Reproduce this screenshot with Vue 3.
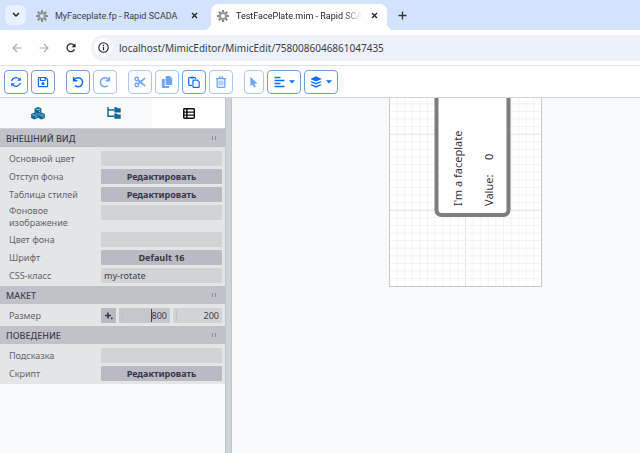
<script setup>
import { ref } from 'vue'

const tabs = [
  { title: 'MyFaceplate.fp - Rapid SCADA', active: false },
  { title: 'TestFacePlate.mim - Rapid SCADA', active: true }
]
const url = ref('localhost/MimicEditor/MimicEdit/7580086046861047435')

const toolGroups = [
  [{ icon: 'sync', label: 'Обновить' }, { icon: 'save', label: 'Сохранить' }],
  [{ icon: 'undo', label: 'Отменить' }, { icon: 'redo', label: 'Повторить', off: true }],
  [
    { icon: 'cut', label: 'Вырезать', off: true },
    { icon: 'copy', label: 'Копировать', off: true },
    { icon: 'paste', label: 'Вставить' },
    { icon: 'trash', label: 'Удалить', off: true }
  ],
  [
    { icon: 'pointer', label: 'Указатель', off: true, slim: true },
    { icon: 'align', label: 'Выравнивание', menu: true },
    { icon: 'layers', label: 'Порядок', menu: true }
  ]
]

const sections = ref([
  {
    title: 'ВНЕШНИЙ ВИД',
    rows: [
      { id: 'color', label: 'Основной цвет', kind: 'text', value: '' },
      { id: 'padding', label: 'Отступ фона', kind: 'button', value: 'Редактировать' },
      { id: 'styles', label: 'Таблица стилей', kind: 'button', value: 'Редактировать' },
      { id: 'image', label: 'Фоновое изображение', kind: 'text', value: '' },
      { id: 'back', label: 'Цвет фона', kind: 'text', value: '' },
      { id: 'font', label: 'Шрифт', kind: 'button', value: 'Default 16' },
      { id: 'css', label: 'CSS-класс', kind: 'text', value: 'my-rotate' }
    ]
  },
  {
    title: 'МАКЕТ',
    rows: [{ id: 'size', label: 'Размер', kind: 'size', value: '800', second: '200' }]
  },
  {
    title: 'ПОВЕДЕНИЕ',
    rows: [
      { id: 'hint', label: 'Подсказка', kind: 'text', value: '' },
      { id: 'script', label: 'Скрипт', kind: 'button', value: 'Редактировать' }
    ]
  }
])

const gear = Array.from({ length: 8 }, (_, i) => i * 45)
const minorX = Array.from({ length: 19 }, (_, i) => (i + 1) * 10)
const minorY = Array.from({ length: 24 }, (_, i) => 247 - (i + 1) * 10)
</script>

<template>
  <div class="browser">
    <header class="tabstrip">
      <button class="tab-search" aria-label="Поиск вкладок">
        <svg width="8" height="6" viewBox="0 0 8 6"><path d="M1 1l3 3 3-3" fill="none" stroke="#222" stroke-width="1.5" /></svg>
      </button>
      <div v-for="tab in tabs" :key="tab.title" class="tab" :class="{ active: tab.active }">
        <svg class="gear" width="12" height="12" viewBox="0 0 12 12">
          <g fill="#858585">
            <rect v-for="a in gear" :key="a" x="5" y="0" width="2" height="3" rx=".5" :transform="`rotate(${a} 6 6)`" />
          </g>
          <circle cx="6" cy="6" r="3" fill="none" stroke="#8c8c8c" stroke-width="2" />
          <circle cx="6" cy="6" r="3.2" fill="none" stroke="#bbb" stroke-width=".6" />
        </svg>
        <span class="tab-title">{{ tab.title }}</span>
        <button class="plain close" aria-label="Закрыть">
          <svg width="7" height="7" viewBox="0 0 7 7"><path d="M1 1l5 5M6 1L1 6" stroke="#222" stroke-width="1.3" /></svg>
        </button>
      </div>
      <button class="plain new-tab" aria-label="Новая вкладка">
        <svg width="9" height="9" viewBox="0 0 9 9"><path d="M4.5 .5v8M.5 4.5h8" stroke="#333" stroke-width="1.3" /></svg>
      </button>
    </header>

    <div class="navbar">
      <button class="plain nav" aria-label="Назад" disabled>
        <svg width="10" height="10" viewBox="0 0 10 10"><path d="M9.5 5H1M5 1L1 5l4 4" fill="none" stroke="#aaa" stroke-width="1.1" /></svg>
      </button>
      <button class="plain nav" aria-label="Вперёд" disabled>
        <svg width="10" height="10" viewBox="0 0 10 10"><path d="M.5 5H9M5 1l4 4-4 4" fill="none" stroke="#aaa" stroke-width="1.1" /></svg>
      </button>
      <button class="plain nav" aria-label="Перезагрузить">
        <svg width="10" height="10" viewBox="0 0 10 10"><path d="M8.5 6.2A3.9 3.9 0 1 1 8 2.4L9 3.6" fill="none" stroke="#222" stroke-width="1.3" /><path d="M9.5.3v3.9H5.6z" fill="#222" /></svg>
      </button>
      <div class="omnibox">
        <span class="site-info">
          <svg width="11" height="11" viewBox="0 0 11 11"><circle cx="5.5" cy="5.5" r="4.7" fill="none" stroke="#222" stroke-width="1.1" /><path d="M5.5 4.8v3.4M5.5 2.7v1.2" stroke="#222" stroke-width="1.3" /></svg>
        </span>
        <input v-model="url" class="url" aria-label="Адрес" />
      </div>
    </div>

    <nav class="toolbar">
      <div v-for="(group, g) in toolGroups" :key="g" class="group">
        <button
          v-for="t in group"
          :key="t.icon"
          class="tool"
          :class="{ slim: t.slim, menu: t.menu }"
          :disabled="t.off"
          :aria-label="t.label"
        >
          <svg v-if="t.icon === 'sync'" width="12" height="12" viewBox="0 0 12 12" fill="none" stroke="currentColor" stroke-width="1.3"><path d="M1.6 5.2A4.4 4.4 0 0 1 9.2 3.2M10.4 6.8A4.4 4.4 0 0 1 2.8 8.8" /><path d="M10.8 1.2v3.5H7.3zM1.2 10.8V7.3h3.5z" fill="currentColor" stroke="none" /></svg>
          <svg v-else-if="t.icon === 'save'" width="12" height="12" viewBox="0 0 12 12"><path d="M2 1.5h6.6l2 2v6.4a.7.7 0 0 1-.7.7H2.1a.7.7 0 0 1-.7-.7V2.1a.6.6 0 0 1 .6-.6zM3.4 1.8v2.7h4.7V1.8" fill="none" stroke="currentColor" stroke-width="1.2" /><circle cx="6" cy="7.4" r="1.5" fill="currentColor" /></svg>
          <svg v-else-if="t.icon === 'undo'" width="12" height="12" viewBox="0 0 12 12"><path d="M1.6 1v3.7h3.7M2 4.4A4.5 4.5 0 1 1 3 9.5" fill="none" stroke="currentColor" stroke-width="1.5" /></svg>
          <svg v-else-if="t.icon === 'redo'" width="12" height="12" viewBox="0 0 12 12"><path d="M10.4 1v3.7H6.7M10 4.4A4.5 4.5 0 1 0 9 9.5" fill="none" stroke="currentColor" stroke-width="1.5" /></svg>
          <svg v-else-if="t.icon === 'cut'" width="12" height="12" viewBox="0 0 12 12" fill="none" stroke="currentColor" stroke-width="1.4"><circle cx="2.7" cy="3" r="1.7" /><circle cx="2.7" cy="9" r="1.7" /><path d="M4 4l7 5.8M4 8l7-5.8" stroke-width="1.7" /></svg>
          <svg v-else-if="t.icon === 'copy'" width="12" height="12" viewBox="0 0 12 12" fill="currentColor"><path d="M5.4 0h3.4l2.4 2.4v5.8a.8.8 0 0 1-.8.8H5.4a.8.8 0 0 1-.8-.8V.8a.8.8 0 0 1 .8-.8z" /><path d="M1.6 3h2.1v6.9h4.5v1.3a.8.8 0 0 1-.8.8H1.6a.8.8 0 0 1-.8-.8V3.8A.8.8 0 0 1 1.6 3z" /></svg>
          <svg v-else-if="t.icon === 'paste'" width="12" height="12" viewBox="0 0 12 12" fill="none" stroke="currentColor" stroke-width="1.2"><path d="M4 9.3H1.4a.7.7 0 0 1-.7-.7V2.2a.7.7 0 0 1 .7-.7h5.4a.7.7 0 0 1 .7.7V3" /><path d="M2.6 1.6h3" stroke-width="2" /><path d="M5.7 4.2h3.5l2 2v4.5a.7.7 0 0 1-.7.7H5.7a.7.7 0 0 1-.7-.7V4.9a.7.7 0 0 1 .7-.7z" /></svg>
          <svg v-else-if="t.icon === 'trash'" width="12" height="12" viewBox="0 0 12 12" fill="none" stroke="currentColor"><path d="M1 2.6h10M4 2.3L4.7 1h2.6L8 2.3" stroke-width="1.2" /><path d="M2.2 3v7.4c0 .6.4 1 1 1h5.6c.6 0 1-.4 1-1V3" stroke-width="1.3" /><path d="M4.2 4.5v5M6 4.5v5M7.8 4.5v5" stroke-width=".9" /></svg>
          <svg v-else-if="t.icon === 'pointer'" width="8" height="12" viewBox="0 0 8 12"><path d="M.4.8v9.4l2.2-1.9 1.5 3.3 1.7-.8-1.5-3.2h3.2z" fill="currentColor" /></svg>
          <svg v-else-if="t.icon === 'align'" width="11" height="12" viewBox="0 0 11 12"><path d="M.5 1.5h6M.5 4.5h10M.5 7.5h6M.5 10.5h10" stroke="currentColor" stroke-width="1.4" /></svg>
          <svg v-else width="12" height="12" viewBox="0 0 12 12" fill="currentColor"><path d="M6 .3l5.8 2.6L6 5.6.2 2.9z" /><path d="M.2 5.9l1.6-.7L6 7.1l4.2-1.9 1.6.7L6 8.6z" /><path d="M.2 8.9l1.6-.7L6 10.1l4.2-1.9 1.6.7L6 11.7z" /></svg>
          <svg v-if="t.menu" width="6" height="4" viewBox="0 0 6 4"><path d="M0 .3h6L3 3.5z" fill="currentColor" /></svg>
        </button>
      </div>
    </nav>

    <main class="workspace">
      <aside class="side">
        <div class="side-tabs">
          <button class="side-tab" aria-label="Компоненты">
            <svg width="14" height="13" viewBox="0 0 14 13">
              <g v-for="p in [[7, 3.5], [3.5, 9.1], [10.5, 9.1]]" :key="p[0]" :transform="`translate(${p[0]} ${p[1]})`">
                <path d="M0-3.5L3.4-2V2L0 3.5-3.4 2V-2z" fill="#0a6796" />
                <path d="M-2-1.5L0-.7l2-.8M.9 1.2L2.3.6" fill="none" stroke="#f8f9fa" stroke-width=".7" />
              </g>
            </svg>
          </button>
          <button class="side-tab" aria-label="Структура">
            <svg width="14" height="12" viewBox="0 0 14 12"><path d="M1 0v9.2h6M1 3h6" fill="none" stroke="#0a6796" stroke-width="1.4" /><path d="M7.3.3h2.6l.8.9h3v4.2H7.3zM7.3 6.5h2.6l.8.9h3v4.3H7.3z" fill="#0a6796" /></svg>
          </button>
          <button class="side-tab current" aria-label="Свойства">
            <svg width="12" height="11" viewBox="0 0 12 11"><rect width="12" height="11" rx="1.4" fill="#111" /><path d="M1.5 1.6h1.6v1.8H1.5zM4.6 1.6h6v1.8h-6zM1.5 4.7h1.6v1.7H1.5zM4.6 4.7h6v1.7h-6zM1.5 7.7h1.6v1.8H1.5zM4.6 7.7h6v1.8h-6z" fill="#fff" /></svg>
          </button>
        </div>
        <section v-for="s in sections" :key="s.title" class="section">
          <h2 class="section-head">
            <span>{{ s.title }}</span>
            <i class="grip"></i>
          </h2>
          <div class="rows">
            <div v-for="r in s.rows" :key="r.id" class="row">
              <label :for="r.id" class="row-label">{{ r.label }}</label>
              <button v-if="r.kind === 'button'" :id="r.id" class="field action">{{ r.value }}</button>
              <input v-else-if="r.kind === 'text'" :id="r.id" v-model="r.value" class="field" />
              <div v-else class="size">
                <button class="field action square" aria-label="Раскрыть">
                  <svg width="8" height="8" viewBox="0 0 8 8"><path d="M3 .5v6M0 3.5h6" stroke="#373845" stroke-width="1.6" /><path d="M6 5.6h1.6v1.6H6z" fill="#373845" /></svg>
                </button>
                <span class="number focused"><i class="caret"></i><input :id="r.id" v-model="r.value" class="field" /></span>
                <span class="number"><input v-model="r.second" class="field" aria-label="Высота" /></span>
              </div>
            </div>
          </div>
        </section>
      </aside>
      <div class="splitter"></div>
      <div class="canvas">
        <svg class="mimic" width="154" height="190" viewBox="0 0 154 190">
          <rect x=".5" y="-5" width="152" height="193.5" fill="#fff" />
          <g transform="translate(.5 .5) scale(.76)">
            <path v-for="x in minorX" :key="'x' + x" :d="`M${x} -2V247`" :stroke="x % 100 ? '#f2f3f4' : '#dde1e5'" stroke-width="1.3" />
            <path v-for="y in minorY" :key="'y' + y" :d="`M0 ${y}H200`" :stroke="(247 - y) % 100 ? '#f2f3f4' : '#dde1e5'" stroke-width="1.3" />
          </g>
          <rect x=".5" y="-5" width="152" height="193.5" fill="none" stroke="#c6cacd" />
          <rect x="47.5" y="-20" width="72" height="137" rx="5" fill="#fff" stroke="#7d7d7d" stroke-width="4" />
          <g class="plate-text">
            <text transform="translate(73 108) rotate(-90)">I'm a faceplate</text>
            <text transform="translate(104 108) rotate(-90)">Value:</text>
            <text transform="translate(104 62) rotate(-90)">0</text>
          </g>
        </svg>
      </div>
    </main>
  </div>
</template>

<style>
body {
  margin: 0;
}
</style>

<style scoped>
* {
  box-sizing: border-box;
}
.browser {
  display: flex;
  flex-direction: column;
  min-height: 100vh;
  background: #fff;
  font-family: "Noto Sans", "Open Sans", sans-serif;
  color: #333;
}
button,
input {
  font-family: inherit;
  margin: 0;
}
svg {
  display: block;
  flex: none;
}
.plain {
  display: flex;
  padding: 0;
  border: 0;
  background: none;
}
.tabstrip {
  display: flex;
  align-items: flex-end;
  height: 30px;
  padding-left: 5px;
  background: #d3e2fd;
}
.tab-search {
  display: flex;
  align-items: center;
  justify-content: center;
  align-self: center;
  width: 21px;
  height: 20px;
  margin-right: 4px;
  padding: 0;
  border: 0;
  border-radius: 6px;
  background: #e9f0fe;
}
.tab {
  display: flex;
  align-items: center;
  gap: 7px;
  width: 181px;
  height: 26px;
  padding: 0 13px 3px 6px;
  border-radius: 7px 7px 0 0;
  font-family: Roboto, "Noto Sans", sans-serif;
  font-size: 9px;
  color: #3c4043;
}
.tab.active {
  width: 176px;
  padding-right: 9px;
  position: relative;
  background: #fff;
  color: #222;
}
.tab.active::before,
.tab.active::after {
  content: "";
  position: absolute;
  bottom: 0;
  width: 7px;
  height: 7px;
}
.tab.active::before {
  left: -7px;
  background: radial-gradient(circle at 0 0, #d3e2fd 7px, #fff 7px);
}
.tab.active::after {
  right: -7px;
  background: radial-gradient(circle at 100% 0, #d3e2fd 7px, #fff 7px);
}
.tab-title {
  flex: 1;
  min-width: 0;
  overflow: hidden;
  white-space: nowrap;
}
.tab.active .tab-title {
  mask-image: linear-gradient(to right, #000 calc(100% - 20px), transparent);
}
.close {
  margin-left: 2px;
}
.new-tab {
  align-self: center;
  margin-left: 11px;
}
.navbar {
  display: flex;
  align-items: center;
  height: 36px;
  padding-left: 12px;
  gap: 17px;
  border-bottom: 1px solid #dfe1e5;
}
.omnibox {
  display: flex;
  flex: 1;
  align-items: center;
  gap: 6px;
  height: 26px;
  padding-left: 3px;
  border-radius: 13px 0 0 13px;
  background: #edf1fa;
}
.navbar .omnibox {
  margin-left: -2px;
}
.site-info {
  display: flex;
  align-items: center;
  justify-content: center;
  width: 19px;
  height: 19px;
  border-radius: 50%;
  background: #fff;
}
.url {
  flex: 1;
  min-width: 0;
  padding: 0;
  border: 0;
  background: none;
  color: #3b3e42;
  font-size: 10px;
}
.toolbar {
  display: flex;
  align-items: center;
  gap: 11px;
  height: 32px;
  padding-left: 4px;
  border-bottom: 1px solid #ced3d8;
}
.group {
  display: flex;
  gap: 3px;
}
.tool {
  display: flex;
  align-items: center;
  justify-content: center;
  gap: 4px;
  width: 24px;
  height: 24px;
  padding: 0;
  border: 1px solid #6f9fd8;
  border-radius: 4px;
  background: #fff;
  color: #0d6efd;
}
.tool:disabled {
  border-color: #a9c8ee;
  color: #6ba6fb;
}
.tool.slim {
  width: 20px;
}
.tool.menu {
  width: 34px;
}
.workspace {
  display: flex;
  flex: 1;
}
.side {
  width: 225px;
  background: #f8f9fa;
}
.side-tabs {
  display: grid;
  grid-template-columns: 76px 76px 1fr;
  height: 31px;
  border-bottom: 1px solid #cdd0d4;
}
.side-tab {
  display: flex;
  align-items: center;
  justify-content: center;
  padding: 0;
  border: 0;
  background: #f8f9fa;
}
.side-tab.current {
  border-radius: 3px 3px 0 0;
  background: #fff;
}
.section {
  background: #e3e5e7;
}
.section-head {
  display: flex;
  align-items: center;
  justify-content: space-between;
  height: 18px;
  margin: 0;
  padding: 0 9px 0 6px;
  background: #c1c2c9;
  color: #3f414c;
  font-size: 9px;
  font-weight: 500;
}
.grip {
  width: 4px;
  height: 4px;
  border: solid #8b8d97;
  border-width: 0 1px;
}
.rows {
  display: grid;
  gap: 3px;
  padding: 4px 3px 3px 9px;
}
.row {
  display: grid;
  grid-template-columns: 92px 1fr;
}
.row-label {
  align-self: center;
  padding-right: 15px;
  color: #62666d;
  font-size: 9px;
  line-height: 12px;
}
.field {
  display: block;
  width: 100%;
  height: 15px;
  padding: 0 3px;
  border: 0;
  border-radius: 1px;
  background: #d2d3d7;
  color: #3b3d47;
  font-size: 9px;
  line-height: 15px;
}
.action {
  background: #b9bac3;
  color: #373845;
  font-weight: 700;
}
.size {
  display: grid;
  grid-template-columns: 15px 51px 1fr;
  gap: 3px;
}
.field.square {
  display: flex;
  align-items: center;
  justify-content: center;
}
.number {
  position: relative;
}
.number .field {
  text-align: right;
}
.number::before {
  content: "";
  position: absolute;
  left: 3px;
  top: 2px;
  width: 1px;
  height: 11px;
  background: #bfc0c7;
}
.focused .field {
  background: #c6c7cd;
}
.caret {
  position: absolute;
  right: 18px;
  top: 1px;
  width: 1px;
  height: 13px;
  background: #444;
}
.splitter {
  width: 7px;
  border: solid #bfc5cb;
  border-width: 0 1px;
  background: #ced3d8;
}
.canvas {
  position: relative;
  flex: 1;
  overflow: hidden;
  background: #f8f9fa;
}
.mimic {
  position: absolute;
  left: 157px;
  top: 0;
}
.plate-text {
  fill: #333;
  font-size: 11px;
}
</style>
